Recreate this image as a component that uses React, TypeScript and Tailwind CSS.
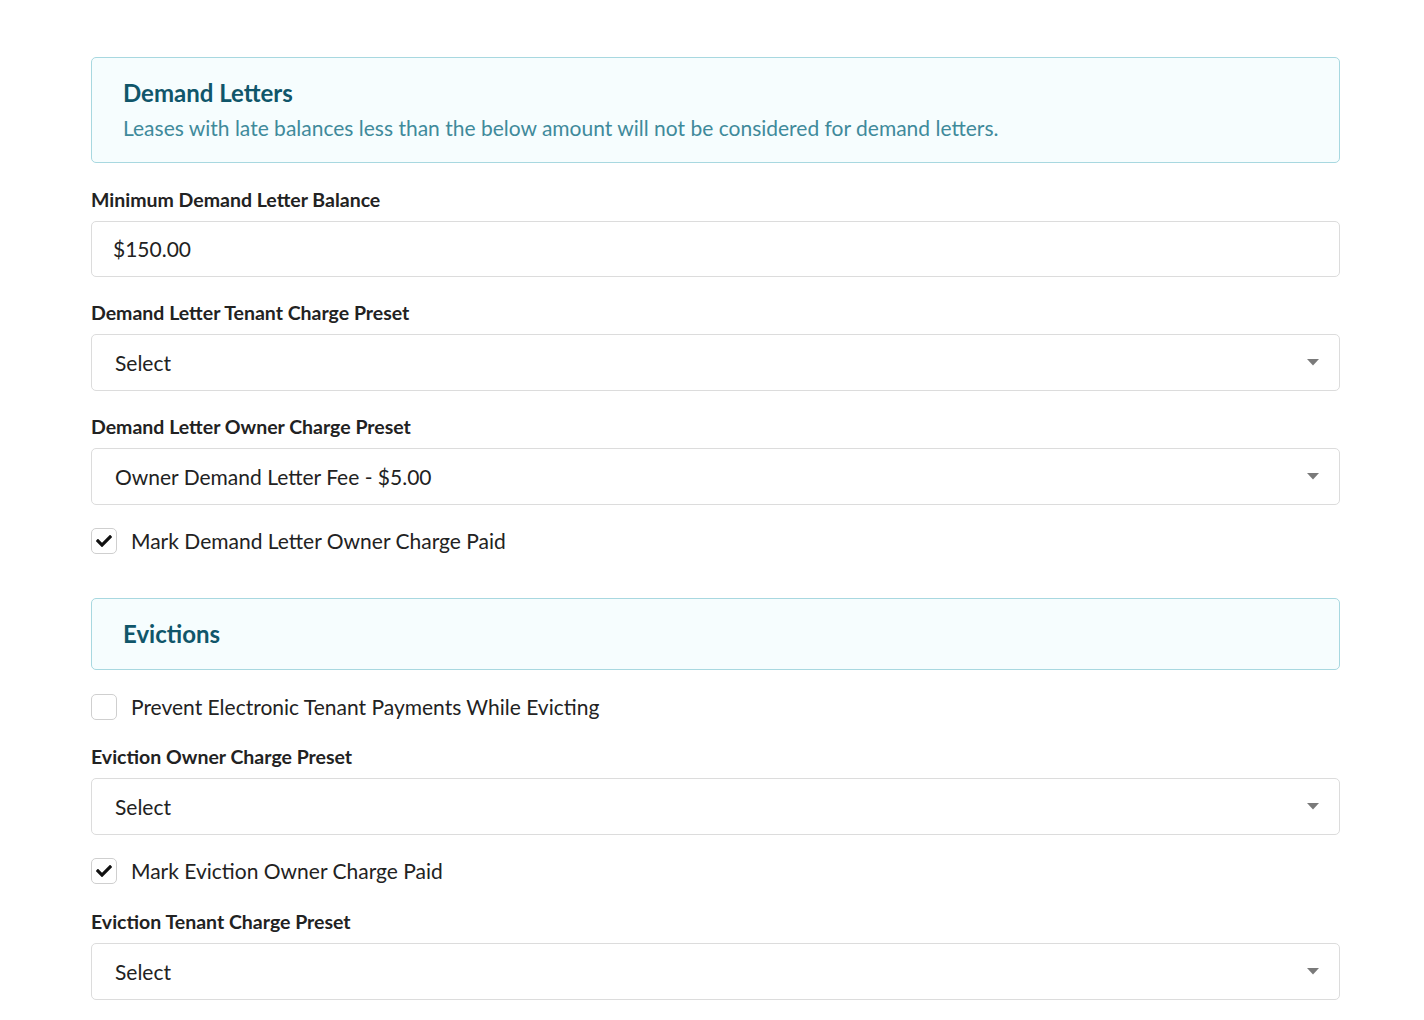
import { useState } from 'react';
import { FaCheck } from 'react-icons/fa';

const Caret = () => (
  <svg width="12" height="7" viewBox="0 0 12 7" className="shrink-0">
    <path d="M0 0h12L6 6.5z" fill="#7a7a7a" />
  </svg>
);

const Notice = ({ title, text }: { title: string; text?: string }) => (
  <div className="rounded-[5px] border border-[#a8d8e0] bg-[#f6fdfe] pl-[31px] pr-8 pt-[20px] pb-[20px]">
    <h3 className="text-[24px] font-bold leading-[30px] text-[#10566a]">{title}</h3>
    {text && <p className="mt-[6px] text-[21px] leading-[28px] text-[#3f8a9b]">{text}</p>}
  </div>
);

const Field = ({ label, children }: { label: string; children: React.ReactNode }) => (
  <div className="flex flex-col gap-[9px]">
    <label className="text-[19.5px] font-bold leading-[24px] text-[#222]">{label}</label>
    {children}
  </div>
);

const SelectBox = ({ value }: { value: string }) => (
  <div className="flex h-[57px] items-center justify-between rounded-[5px] border border-[#dcdcdc] bg-white pl-[23px] pr-[20px]">
    <span className="text-[21px] text-[#222]">{value}</span>
    <Caret />
  </div>
);

const Check = ({ label, initial }: { label: string; initial: boolean }) => {
  const [on, setOn] = useState(initial);
  return (
    <button type="button" onClick={() => setOn(!on)} className="flex h-[26px] items-center gap-[14px] text-left">
      <span className="flex h-[26px] w-[26px] items-center justify-center rounded-[5px] border border-[#cfcfcf] bg-white">
        {on && <FaCheck className="h-[16px] w-[16px] text-[#111]" />}
      </span>
      <span className="text-[21px] leading-[26px] text-[#222]">{label}</span>
    </button>
  );
};

export default function App() {
  return (
    <div className="min-h-screen bg-white font-['Lato','Liberation_Sans',sans-serif]">
      <div className="ml-[91px] w-[1249px] pt-[57px] pb-10">
        <Notice
          title="Demand Letters"
          text="Leases with late balances less than the below amount will not be considered for demand letters."
        />

        <div className="mt-[25px] flex flex-col gap-[24px]">
          <Field label="Minimum Demand Letter Balance">
            <div className="flex h-[56px] items-center rounded-[5px] border border-[#dcdcdc] bg-white px-[21px]">
              <span className="text-[21px] text-[#222]">$150.00</span>
            </div>
          </Field>
          <Field label="Demand Letter Tenant Charge Preset">
            <SelectBox value="Select" />
          </Field>
          <Field label="Demand Letter Owner Charge Preset">
            <SelectBox value="Owner Demand Letter Fee - $5.00" />
          </Field>
          <div className="-mt-[1px]">
            <Check label="Mark Demand Letter Owner Charge Paid" initial={true} />
          </div>
        </div>

        <div className="mt-[44px]">
          <Notice title="Evictions" />
        </div>

        <div className="mt-[24px] flex flex-col gap-[25px]">
          <Check label="Prevent Electronic Tenant Payments While Evicting" initial={false} />
          <Field label="Eviction Owner Charge Preset">
            <SelectBox value="Select" />
          </Field>
          <div className="-mt-[2px] mb-[1px]">
            <Check label="Mark Eviction Owner Charge Paid" initial={true} />
          </div>
          <Field label="Eviction Tenant Charge Preset">
            <SelectBox value="Select" />
          </Field>
        </div>
      </div>
    </div>
  );
}
